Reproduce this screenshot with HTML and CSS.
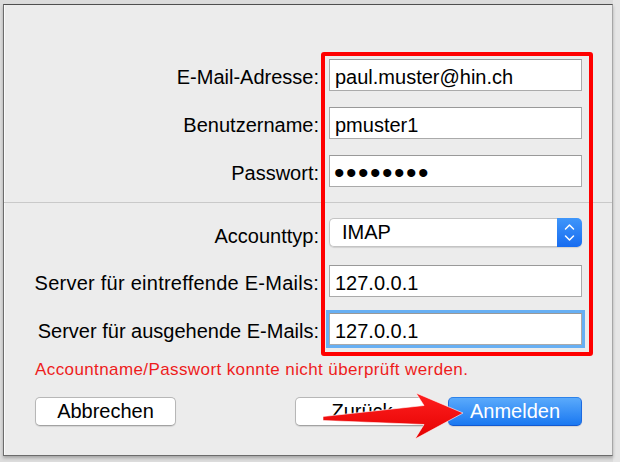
FILE: index.html
```html
<!DOCTYPE html>
<html lang="de">
<head>
    <meta charset="UTF-8">
    <meta name="viewport" content="width=device-width, initial-scale=1.0">
    <title>Account hinzufügen</title>
    <link rel="stylesheet" href="styles.css">
</head>
<body>
    <div class="screen">
        <div class="dialog">
            <!-- Login -->
            <div class="rows">
                <div class="row">
                    <div class="label">E-Mail-Adresse:</div>
                    <div class="field">paul.muster@hin.ch</div>
                </div>
                <div class="row">
                    <div class="label">Benutzername:</div>
                    <div class="field">pmuster1</div>
                </div>
                <div class="row">
                    <div class="label">Passwort:</div>
                    <div class="field field-password">&#8226;&#8226;&#8226;&#8226;&#8226;&#8226;&#8226;&#8226;</div>
                </div>
            </div>

            <div class="separator"></div>

            <!-- Server -->
            <div class="rows">
                <div class="row">
                    <div class="label">Accounttyp:</div>
                    <div class="popup">
                        <span class="popup-value">IMAP</span>
                        <span class="popup-arrows">
                            <svg width="25" height="29" viewBox="0 0 25 29">
                                <path d="M8.5 11 L12.5 7 L16.5 11 M8.5 18 L12.5 22 L16.5 18" fill="none" stroke="#fff" stroke-width="1.5" stroke-linecap="round" stroke-linejoin="round"/>
                            </svg>
                        </span>
                    </div>
                </div>
                <div class="row row-spaced">
                    <div class="label label-wide">Server für eintreffende E-Mails:</div>
                    <div class="field">127.0.0.1</div>
                </div>
                <div class="row">
                    <div class="label">Server für ausgehende E-Mails:</div>
                    <div class="field field-focused">127.0.0.1</div>
                </div>
            </div>

            <p class="error">Accountname/Passwort konnte nicht überprüft werden.</p>

            <div class="buttons">
                <button class="button button-cancel" type="button">Abbrechen</button>
                <div class="button-group">
                    <button class="button button-back" type="button">Zurück</button>
                    <button class="button button-default" type="button">Anmelden</button>
                </div>
            </div>

            <!-- Annotations -->
            <div class="highlight-box"></div>
            <svg class="arrow" width="155" height="57" viewBox="315 388 155 57">
                <defs>
                    <linearGradient id="arrow-fill" x1="0" y1="0" x2="0" y2="1">
                        <stop offset="0" stop-color="#ff2020"/>
                        <stop offset="1" stop-color="#e40000"/>
                    </linearGradient>
                </defs>
                <polygon points="323,416.5 424,405.5 416,393 463,413 415,439 424,424.5 323,420.5" fill="url(#arrow-fill)" stroke="#ffffff" stroke-opacity="0.6" stroke-width="1" stroke-linejoin="round"/>
            </svg>
        </div>
    </div>
</body>
</html>
```

FILE: styles.css
```css
* {
    margin: 0;
    padding: 0;
    box-sizing: border-box;
}

body {
    width: 620px;
    height: 462px;
    overflow: hidden;
    background-color: #cdcdcd;
    font-family: "Liberation Sans", Arial, sans-serif;
    color: #000;
}

.screen {
    height: 462px;
    padding: 4px 0 0 3px;
    background: linear-gradient(90deg, #dcdcdc 0, #dcdcdc 613px, #e6e6e6 613px);
}

/* Dialog */
.dialog {
    position: relative;
    width: 610px;
    height: 452px;
    padding-top: 54px;
    background-color: #ececec;
    border: 1px solid #6c6c6c;
    border-top-color: #4f4f4f;
    border-right-color: #a6a6a6;
    box-shadow: inset 1px 0 0 #fafafa, 0 2px 3px rgba(0, 0, 0, 0.25);
}

.row {
    display: flex;
    align-items: flex-start;
    gap: 10px;
}

.row + .row {
    margin-top: 16px;
}

.row + .row-spaced {
    margin-top: 15px;
}

.label {
    width: 315px;
    height: 32px;
    flex-shrink: 0;
    padding-top: 2px;
    text-align: right;
    font-size: 20px;
    line-height: 32px;
    white-space: nowrap;
}

.label-wide {
    letter-spacing: 0.25px;
}

.field {
    width: 253px;
    height: 32px;
    padding: 2px 5px 0;
    background-color: #fff;
    border: 1px solid #aaaaaa;
    border-top-color: #999999;
    font-size: 20px;
    line-height: 30px;
    white-space: nowrap;
}

.field-password {
    font-size: 30px;
    letter-spacing: 1.5px;
    padding-left: 4px;
}

.field-focused {
    box-shadow: 0 0 0 3px rgba(70, 160, 245, 0.8);
}

.separator {
    height: 1px;
    margin: 15px 0;
    background-color: #c9c9c9;
}

/* Popup */
.popup {
    display: flex;
    width: 253px;
    height: 29px;
    border-radius: 5px;
    box-shadow: 0 1px 1px rgba(0, 0, 0, 0.12);
}

.popup-value {
    flex: 1;
    padding-left: 12px;
    background-color: #fff;
    border: 1px solid #c4c4c4;
    border-right: none;
    border-radius: 5px 0 0 5px;
    font-size: 20px;
    line-height: 27px;
}

.popup-arrows {
    display: flex;
    width: 25px;
    background: linear-gradient(#3f96fa, #176cf0);
    border-radius: 0 5px 5px 0;
}

.error {
    margin: 14px 0 0 31px;
    font-size: 17px;
    letter-spacing: 0.4px;
    line-height: 22px;
    color: #ee1c1c;
}

/* Buttons */
.buttons {
    display: flex;
    justify-content: space-between;
    margin-top: 16px;
    padding: 0 30px 0 31px;
}

.button-group {
    display: flex;
    gap: 19px;
}

.button {
    height: 29px;
    background-color: #fff;
    border: 1px solid #b7b7b7;
    border-bottom-color: #a2a2a2;
    border-radius: 5px;
    box-shadow: 0 1px 1px rgba(0, 0, 0, 0.1);
    font-family: "Liberation Sans", Arial, sans-serif;
    font-size: 20px;
    line-height: 27px;
    color: #000;
}

.button-cancel {
    width: 141px;
}

.button-back {
    width: 134px;
}

.button-default {
    width: 134px;
    background: linear-gradient(#5aaafb, #1a78f1);
    border-color: #2c82ea #1d6ae0 #1259d0;
    color: #fff;
}

/* Annotations */
.highlight-box {
    position: absolute;
    left: 317px;
    top: 47px;
    width: 272px;
    height: 304px;
    border: 4px solid #ff0000;
    border-radius: 3px;
    pointer-events: none;
}

.arrow {
    position: absolute;
    left: 311px;
    top: 383px;
}
```
